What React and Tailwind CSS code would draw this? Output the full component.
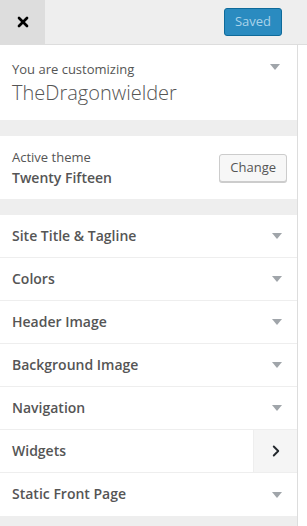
import { X, ChevronRight } from "lucide-react";

const sections = [
  "Site Title & Tagline",
  "Colors",
  "Header Image",
  "Background Image",
  "Navigation",
  "Widgets",
  "Static Front Page",
];

function Caret() {
  return (
    <svg width="10" height="6" viewBox="0 0 10 6" className="shrink-0">
      <path d="M0 0 L10 0 L5 6 Z" fill="#a0a5aa" />
    </svg>
  );
}

export default function App() {
  return (
    <div
      className="w-[307px] h-[526px] bg-white overflow-hidden text-[#555]"
      style={{ fontFamily: '"Open Sans", "Noto Sans", sans-serif' }}
    >
      {/* Header */}
      <div className="flex items-center h-[45px] bg-[#eee] border-b border-[#ddd]">
        <button className="w-[45px] h-[44px] flex items-center justify-center bg-[#ddd]">
          <X size={16} strokeWidth={4} color="#000" />
        </button>
        <div className="flex-1" />
        <button className="mr-[25px] h-[28px] px-[10px] rounded-[3px] bg-[#2a8bc0] border border-[#0e6a9a] text-[#a9d3ea] text-[13px]">
          Saved
        </button>
      </div>

      <div className="w-[298px] h-[481px] bg-[#eee] border-r border-[#ddd] flex flex-col">
        {/* Info */}
        <div className="bg-white h-[75px] px-[12px] pt-[14px] flex justify-between">
          <div>
            <div className="text-[13px] leading-[20px]">You are customizing</div>
            <div className="text-[20px] leading-[28px] font-light text-[#555]">TheDragonwielder</div>
          </div>
          <div className="pt-[5px] pr-[5px]">
            <Caret />
          </div>
        </div>

        {/* Theme */}
        <div className="mt-[16px] bg-white h-[63px] px-[12px] flex items-center justify-between">
          <div>
            <div className="text-[13px] leading-[20px]">Active theme</div>
            <div className="text-[14px] leading-[22px] font-semibold">Twenty Fifteen</div>
          </div>
          <button className="h-[28px] px-[10px] rounded-[3px] bg-[#f7f7f7] border border-[#ccc] shadow-[0_1px_0_#ccc] text-[13px] text-[#555] mr-[-2px]">
            Change
          </button>
        </div>

        {/* Sections */}
        <div className="mt-[16px] flex flex-col">
          {sections.map((s) => (
            <div
              key={s}
              className="bg-white h-[43px] border-b border-[#eee] last:border-b-0 flex items-center justify-between pl-[12px]"
            >
              <span className="text-[14px] font-semibold text-[#555] -mt-[2px]">{s}</span>
              {s === "Widgets" ? (
                <div className="w-[44px] h-full bg-[#f5f5f5] border-l border-[#eee] flex items-center justify-center">
                  <ChevronRight size={18} strokeWidth={2.5} color="#23282d" />
                </div>
              ) : (
                <div className="pr-[15px]">
                  <Caret />
                </div>
              )}
            </div>
          ))}
        </div>
      </div>
    </div>
  );
}
